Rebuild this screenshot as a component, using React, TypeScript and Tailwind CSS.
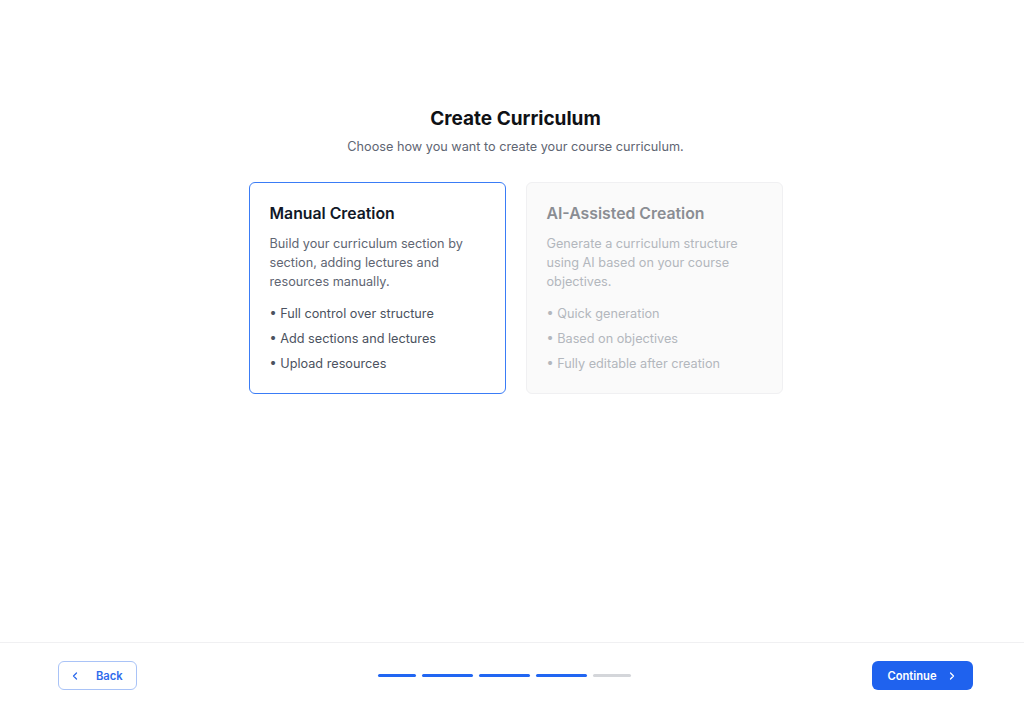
import React from "react";

const ChevronLeft = () => (
  <svg width="12" height="12" viewBox="0 0 24 24" fill="none" stroke="currentColor" strokeWidth="2.5" strokeLinecap="round" strokeLinejoin="round">
    <path d="M15 18l-6-6 6-6" />
  </svg>
);
const ChevronRight = () => (
  <svg width="12" height="12" viewBox="0 0 24 24" fill="none" stroke="currentColor" strokeWidth="2.5" strokeLinecap="round" strokeLinejoin="round">
    <path d="M9 18l6-6-6-6" />
  </svg>
);

function Card({
  title,
  desc,
  bullets,
  active,
}: {
  title: string;
  desc: string;
  bullets: string[];
  active: boolean;
}) {
  return (
    <div
      className={
        "w-[257px] h-[212px] rounded-[6px] border px-5 pt-[21px] " +
        (active ? "border-[#3a7cf6] bg-white" : "border-[#f0f0f2] bg-[#fafafa]")
      }
    >
      <div className={"text-[15.8px] leading-5 font-semibold " + (active ? "text-[#111827]" : "text-[#8a8d93]")}>
        {title}
      </div>
      <p className={"mt-[10px] text-[12.7px] leading-[19px] " + (active ? "text-[#5f6673]" : "text-[#b3b7bd]")}>
        {desc}
      </p>
      <ul className={"mt-[13px] flex flex-col gap-[5px] text-[12.7px] leading-5 " + (active ? "text-[#4b5260]" : "text-[#b3b7bd]")}>
        {bullets.map((b) => (
          <li key={b}>• {b}</li>
        ))}
      </ul>
    </div>
  );
}

export default function App() {
  return (
    <div className="w-full h-screen bg-white flex flex-col overflow-hidden" style={{ fontFamily: "Inter, 'Noto Sans', sans-serif" }}>
      <main className="h-[642px] shrink-0 flex flex-col items-center pt-[105px] pl-[7px]">
        <h1 className="text-[19px] leading-7 font-bold text-[#0f1115]">Create Curriculum</h1>
        <p className="mt-1 text-[12.7px] leading-5 text-[#5f6673]">Choose how you want to create your course curriculum.</p>
        <div className="mt-[25px] flex gap-5">
          <Card
            active
            title="Manual Creation"
            desc="Build your curriculum section by section, adding lectures and resources manually."
            bullets={["Full control over structure", "Add sections and lectures", "Upload resources"]}
          />
          <Card
            active={false}
            title="AI-Assisted Creation"
            desc="Generate a curriculum structure using AI based on your course objectives."
            bullets={["Quick generation", "Based on objectives", "Fully editable after creation"]}
          />
        </div>
      </main>
      <footer className="border-t border-[#f0f0f2] flex items-center justify-between pl-[58px] pr-[51px] pt-[18px]">
        <button className="h-[29px] w-[79px] rounded-[6px] border border-[#a9c3f7] text-[#2f6bec] text-[11.2px] font-semibold flex items-center pl-[10px] pt-[1px] gap-[15px]">
          <ChevronLeft />
          <span>Back</span>
        </button>
        <div className="flex items-center gap-[6px]">
          <div className="h-[3px] w-[38px] rounded-full bg-[#2166f2]" />
          <div className="h-[3px] w-[51px] rounded-full bg-[#2166f2]" />
          <div className="h-[3px] w-[51px] rounded-full bg-[#2166f2]" />
          <div className="h-[3px] w-[51px] rounded-full bg-[#2166f2]" />
          <div className="h-[3px] w-[38px] rounded-full bg-[#d4d6da]" />
        </div>
        <button className="h-[29px] w-[101px] rounded-[6px] bg-[#1f62ee] text-white text-[11.2px] font-semibold flex items-center justify-center pt-[1px] gap-[9px]">
          <span>Continue</span>
          <ChevronRight />
        </button>
      </footer>
    </div>
  );
}
